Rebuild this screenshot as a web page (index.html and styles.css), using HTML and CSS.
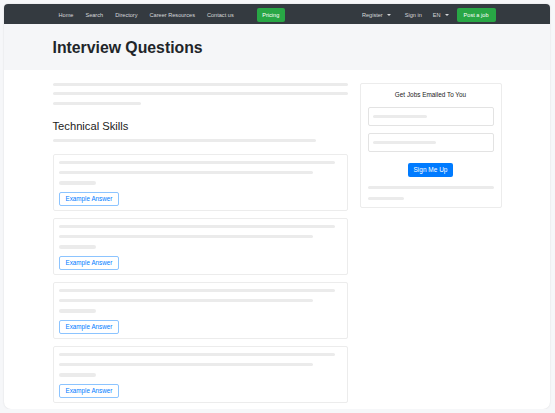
FILE: index.html
```html
<!DOCTYPE html>
<html lang="en">
<head>
<meta charset="utf-8">
<title>Interview Questions</title>
<link rel="stylesheet" href="styles.css">
</head>
<body>
<div class="window">
  <nav class="navbar">
    <div class="nav-inner">
      <a class="nav-link">Home</a>
      <a class="nav-link">Search</a>
      <a class="nav-link">Directory</a>
      <a class="nav-link">Career Resources</a>
      <a class="nav-link">Contact us</a>
      <a class="btn-green pricing">Pricing</a>
      <div class="spacer"></div>
      <a class="nav-link register">Register<span class="caret"></span></a>
      <a class="nav-link signin">Sign in</a>
      <a class="nav-link lang">EN<span class="caret"></span></a>
      <a class="btn-green post">Post a job</a>
    </div>
  </nav>
  <header class="page-header">
    <div class="container">
      <h1>Interview Questions</h1>
    </div>
  </header>
  <main class="container content">
    <section class="main-col">
      <div class="intro">
        <div class="sk w-full"></div>
        <div class="sk w-full"></div>
        <div class="sk w-intro"></div>
      </div>
      <h2>Technical Skills</h2>
      <div class="sk sk-sub"></div>
      <div class="cards">
        <div class="card">
          <div class="sk l1"></div><div class="sk l2"></div><div class="sk l3"></div>
          <a class="btn-outline">Example Answer</a>
        </div>
        <div class="card">
          <div class="sk l1"></div><div class="sk l2"></div><div class="sk l3"></div>
          <a class="btn-outline">Example Answer</a>
        </div>
        <div class="card">
          <div class="sk l1"></div><div class="sk l2"></div><div class="sk l3"></div>
          <a class="btn-outline">Example Answer</a>
        </div>
        <div class="card">
          <div class="sk l1"></div><div class="sk l2"></div><div class="sk l3"></div>
          <a class="btn-outline">Example Answer</a>
        </div>
      </div>
    </section>
    <aside class="sidebar">
      <div class="signup-card">
        <div class="signup-title">Get Jobs Emailed To You</div>
        <div class="input"><div class="sk in1"></div></div>
        <div class="input second"><div class="sk in2"></div></div>
        <a class="btn-primary">Sign Me Up</a>
        <div class="sk side-full"></div>
        <div class="sk side-short"></div>
      </div>
    </aside>
  </main>
</div>
</body>
</html>
```
FILE: styles.css
```css
* { box-sizing: border-box; }

body {
  margin: 0;
  background: #f6f7f9;
  font-family: "Liberation Sans", Arial, sans-serif;
}

.window {
  margin: 4px 0 0 4px;
  width: 546px;
  height: 405px;
  background: #ffffff;
  border-radius: 4px 4px 7px 7px;
  box-shadow: 0 0 2px rgba(0, 0, 0, 0.12);
  overflow: hidden;
}

.navbar {
  height: 20px;
  background: #343a40;
}

.nav-inner {
  width: 449px;
  margin: 0 auto;
  padding: 4px 6px 0;
  display: flex;
  align-items: center;
}

.nav-link {
  color: #d6d8da;
  font-size: 5.6px;
  line-height: 14px;
  text-decoration: none;
  margin-right: 12px;
  display: flex;
  align-items: center;
}

.caret {
  display: inline-block;
  width: 0;
  height: 0;
  margin-left: 4px;
  border-top: 2.5px solid #d6d8da;
  border-left: 2px solid transparent;
  border-right: 2px solid transparent;
}

.btn-green {
  background: #28a745;
  color: #ffffff;
  font-size: 5.6px;
  height: 14px;
  line-height: 14px;
  padding: 0 5.5px;
  border-radius: 2px;
}

.pricing { margin-left: 11px; }
.spacer { flex: 1; }
.register { margin-right: 14px; }
.signin { margin-right: 11px; }
.lang { margin-right: 8px; }
.post { padding: 0 7px; }

.container {
  width: 449px;
  margin: 0 auto;
}

.page-header {
  height: 46px;
  background: #f5f6f8;
}

h1 {
  margin: 0;
  padding-top: 16px;
  font-size: 15.8px;
  line-height: 1;
  font-weight: bold;
  color: #212529;
}

.content {
  display: flex;
  gap: 12px;
  padding-top: 12.5px;
}

.main-col { width: 295px; }
.sidebar { width: 142px; }

.sk {
  height: 3px;
  background: #ebebeb;
  border-radius: 2px;
}

.intro .sk + .sk { margin-top: 6.5px; }
.w-full { width: 100%; }
.w-intro { width: 88px; }

h2 {
  margin: 16px 0 0;
  font-size: 11.2px;
  line-height: 1;
  font-weight: normal;
  color: #222222;
}

.sk-sub {
  width: 263px;
  margin-top: 7.3px;
}

.cards {
  margin-top: 11.8px;
  display: flex;
  flex-direction: column;
  gap: 6.5px;
}

.card {
  border: 1px solid #ececec;
  border-radius: 2px;
  padding: 6px 5px 4px;
}

.card .sk {
  height: 3.3px;
  margin-bottom: 7px;
}

.card .l1 { width: 276px; }
.card .l2 { width: 254px; }
.card .l3 { width: 37px; margin-bottom: 7.3px; }

.btn-outline {
  display: block;
  width: fit-content;
  height: 14.3px;
  line-height: 12.3px;
  padding: 0 6px;
  border: 1px solid #8cc4ff;
  border-radius: 2px;
  color: #007bff;
  font-size: 6.3px;
}

.signup-card {
  border: 1px solid #ececec;
  border-radius: 2px;
  padding: 7.7px 7px 7px;
}

.signup-title {
  font-size: 6.4px;
  line-height: 8px;
  text-align: center;
  color: #222222;
}

.input {
  height: 18.4px;
  margin-top: 8.3px;
  border: 1px solid #e3e3e3;
  border-radius: 2px;
  padding-left: 4px;
  display: flex;
  align-items: center;
}

.input.second { margin-top: 7.6px; }
.in1 { width: 54px; }
.in2 { width: 63px; }

.btn-primary {
  display: block;
  width: 45.4px;
  height: 14px;
  margin: 11.6px auto 0;
  background: #007bff;
  color: #ffffff;
  font-size: 6.5px;
  line-height: 14px;
  text-align: center;
  border-radius: 2px;
}

.side-full {
  width: 100%;
  margin-top: 8.4px;
}

.side-short {
  width: 36px;
  margin-top: 8px;
}
```
